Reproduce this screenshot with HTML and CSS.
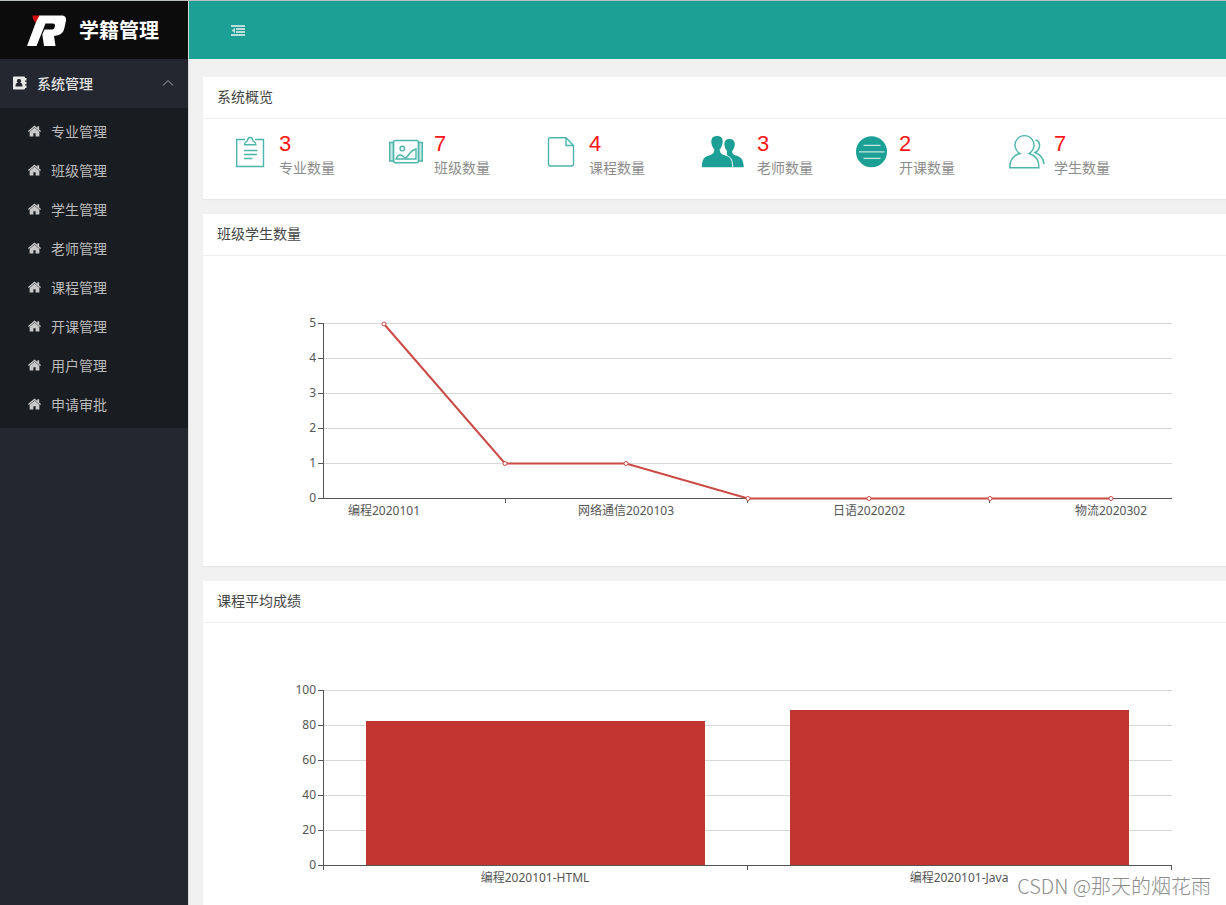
FILE: index.html
```html
<!DOCTYPE html>
<html lang="zh-CN">
<head>
<meta charset="utf-8">
<title>学籍管理</title>
<link rel="stylesheet" href="styles.css">
</head>
<body>
<svg class="defs" aria-hidden="true">
  <symbol id="home" viewBox="0 0 12 11"><path d="M6 .4 0 5.600l.7.9L6 2l5.300 4.500.7-.9-1.700-1.500V1H8.600v1.600zM6 2.500 1.500 6.300v4.200H5V7.500h2v3h3.500V6.300z"/></symbol>
</svg>
<div class="app">
  <aside class="sidebar">
    <div class="brand">
      <svg class="brand-logo" viewBox="0 0 40 32" aria-hidden="true">
        <path class="logo-red" d="M5.500.5h8L9 7.500C7 6.500 5.500 4 5.500.5z"/>
        <path class="logo-white" d="M12.500.5h21.500c4 0 5.700 2 4.900 5.500l-1.500 7c-.8 4-2.900 6.300-6.400 7.300l-4 .7 1.500 10H17L15.300 19.500l2.200-5h7c1.800 0 2.800-.6 3.200-2.300l.2-.9c.4-1.900-.3-2.700-2-2.700H18.500L9.500 31H0L8.800 7.500z"/>
      </svg>
      <h1 class="brand-name">学籍管理</h1>
    </div>
    <nav>
      <button class="group" type="button" aria-expanded="true">
        <svg class="group-icon" viewBox="0 0 14 14" aria-hidden="true"><path class="book" d="M1 .5H11q1 0 1 1v11Q12 13.500 11 13.500H1Q0 13.500 0 12.500v-11Q0 .5 1 .5zM12 2h1.500v2.500H12zM12 5.800h1.500v2.500H12zM12 9.500h1.500V12H12z"/><path class="person" d="M6 3a2 2 0 0 1 1.200 3.700c1.500.3 2.300 1.200 2.300 3.800h-7c0-2.600.8-3.500 2.300-3.800A2 2 0 0 1 6 3z"/></svg>
        <span>系统管理</span>
        <svg class="chevron" viewBox="0 0 12 8" aria-hidden="true"><path d="M1 6.500 6 1.500l5 5"/></svg>
      </button>
      <ul class="menu">
        <li><a href="#"><svg><use href="#home"/></svg>专业管理</a></li>
        <li><a href="#"><svg><use href="#home"/></svg>班级管理</a></li>
        <li><a href="#"><svg><use href="#home"/></svg>学生管理</a></li>
        <li><a href="#"><svg><use href="#home"/></svg>老师管理</a></li>
        <li><a href="#"><svg><use href="#home"/></svg>课程管理</a></li>
        <li><a href="#"><svg><use href="#home"/></svg>开课管理</a></li>
        <li><a href="#"><svg><use href="#home"/></svg>用户管理</a></li>
        <li><a href="#"><svg><use href="#home"/></svg>申请审批</a></li>
      </ul>
    </nav>
  </aside>
  <div class="page">
    <header class="topbar">
      <button class="toggle" type="button" aria-label="折叠菜单">
        <svg viewBox="0 0 14 11" aria-hidden="true"><path d="M0 0h14v2H0zM5 3h9v2H5zM5 6h9v2H5zM0 9h14v2H0zM4 2.800v5.400L.5 5.500z"/></svg>
      </button>
    </header>
    <main class="content">
      <section class="card">
        <h2 class="card-title">系统概览</h2>
        <div class="stats">
          <div class="stat">
            <svg class="stat-icon outline" viewBox="0 0 45 48" aria-hidden="true"><path d="M11 7.500H2.700V34.500H29.500V7.500H21M10.500 12.700c0-3 3-2.700 3.200-4.700.3-3.300 4.700-3.300 5 0 .2 2 3.200 1.700 3.200 4.700zM10 18.500h13.500M10 22.500h13M10 26.500h8.500"/></svg>
            <p class="figure"><strong>3</strong><span>专业数量</span></p>
          </div>
          <div class="stat">
            <svg class="stat-icon outline" viewBox="0 0 45 48" aria-hidden="true"><path class="tint" d="M4.500 10.500H.7v18.500h3.800zM29.500 10.500h3.800v18.500h-3.800z"/><rect x="4.500" y="8.500" width="25" height="22.300" rx="2"/><circle cx="13.300" cy="16.600" r="2.300"/><path d="M7 27c2-5 5-5 8-2 4 3 4-6 12-8v10z"/></svg>
            <p class="figure"><strong>7</strong><span>班级数量</span></p>
          </div>
          <div class="stat">
            <svg class="stat-icon outline" viewBox="0 0 45 48" aria-hidden="true"><path d="M6.500 5.700H22l7.500 7.800V32q0 2-2 2h-21q-2 0-2-2V7.700q0-2 2-2zM22 5.700v7.800h7.500"/></svg>
            <p class="figure"><strong>4</strong><span>课程数量</span></p>
          </div>
          <div class="stat">
            <svg class="stat-icon wide solid" viewBox="0 0 58 48" aria-hidden="true"><path d="M30.500 7c3.900 0 5.700 2.700 5.200 6.200-.3 2.300-1.200 4.300-2.500 5.800 0 3 1 3.500 4 4.500 4.500 1.500 7.500 4 7.500 11.800H28V19c-1.300-1.500-2.200-3.500-2.500-5.800C25 9.700 26.600 7 30.500 7z"/><path class="front" d="M18 3.500c4.600 0 6.700 3.200 6.100 7.500-.3 2.500-1.500 4.800-2.900 6.500 0 3.500 1.500 4.500 5 5.500 5 1.500 7.500 4 7.500 12.800H2.300C2.300 27 5 24.500 10 23c3.500-1 4.800-2 4.800-5.500-1.400-1.700-2.600-4-2.900-6.500-.6-4.300 1.500-7.500 6.100-7.500z"/></svg>
            <p class="figure"><strong>3</strong><span>老师数量</span></p>
          </div>
          <div class="stat">
            <svg class="stat-icon solid" viewBox="0 0 45 48" aria-hidden="true"><circle cx="17.500" cy="19.700" r="15.500"/><path class="lines" d="M9.500 13.300h17M5 19.800h25.500M9.500 26.300h17"/></svg>
            <p class="figure"><strong>2</strong><span>开课数量</span></p>
          </div>
          <div class="stat">
            <svg class="stat-icon outline" viewBox="0 0 45 48" aria-hidden="true"><path d="M11 21.500a9.500 9.500 0 1 1 9 0c6 1.500 10 6.500 10 14.200H.7C.7 28 5 23 11 21.500zM26.500 8c6 1.500 5 10-.5 12.500 5.500 2 8.500 6 9 11.500"/></svg>
            <p class="figure"><strong>7</strong><span>学生数量</span></p>
          </div>
        </div>
      </section>
      <section class="card">
        <h2 class="card-title">班级学生数量</h2>
        <svg class="chart" viewBox="0 0 1023 310" role="img" aria-label="班级学生数量">
          <path class="grid" d="M121 67.500H969M121 102.500H969M121 137.500H969M121 172.500H969M121 207.500H969"/>
          <path class="axis" d="M120.500 67V243M115 67.500h5M115 102.500h5M115 137.500h5M115 172.500h5M115 207.500h5M115 242.500H969M302.500 243v4M544.500 243v4M786.500 243v4"/>
          <g class="y-labels"><text x="113" y="71">5</text><text x="113" y="106">4</text><text x="113" y="141">3</text><text x="113" y="176">2</text><text x="113" y="211">1</text><text x="113" y="246">0</text></g>
          <g class="x-labels"><text x="181" y="259">编程2020101</text><text x="423" y="259">网络通信2020103</text><text x="666" y="259">日语2020202</text><text x="908" y="259">物流2020302</text></g>
          <path class="line" d="M181 68 302 207.500H423L545 242.500H908"/>
          <g class="points"><circle cx="181" cy="68" r="2"/><circle cx="302" cy="207.500" r="2"/><circle cx="423" cy="207.500" r="2"/><circle cx="545" cy="242.500" r="2"/><circle cx="666" cy="242.500" r="2"/><circle cx="787" cy="242.500" r="2"/><circle cx="908" cy="242.500" r="2"/></g>
        </svg>
      </section>
      <section class="card">
        <h2 class="card-title">课程平均成绩</h2>
        <svg class="chart" viewBox="0 0 1023 310" role="img" aria-label="课程平均成绩">
          <path class="grid" d="M121 67.500H969M121 102.500H969M121 137.500H969M121 172.500H969M121 207.500H969"/>
          <path class="bar" d="M163 98H502V242H163zM587 87H926V242H587z"/>
          <path class="axis" d="M120.500 67V247M115 67.500h5M115 102.500h5M115 137.500h5M115 172.500h5M115 207.500h5M115 242.500H969M544.500 243v4M968.500 243v4"/>
          <g class="y-labels"><text x="113" y="71">100</text><text x="113" y="106">80</text><text x="113" y="141">60</text><text x="113" y="176">40</text><text x="113" y="211">20</text><text x="113" y="246">0</text></g>
          <g class="x-labels"><text x="332" y="259">编程2020101-HTML</text><text x="756" y="259">编程2020101-Java</text></g>
        </svg>
      </section>
    </main>
  </div>
  <p class="watermark">CSDN @那天的烟花雨</p>
</div>
</body>
</html>
```

FILE: styles.css
```css
* { box-sizing: border-box; margin: 0; padding: 0; }
body { font-family: "Liberation Sans", "Noto Sans CJK SC", sans-serif; font-size: 14px; color: #444; background: #f1f1f1; }
.defs { position: absolute; width: 0; height: 0; }
.app { position: relative; display: flex; height: 100vh; overflow: hidden; border-top: 1px solid #b9bfc1; }
.sidebar { flex: 0 0 188px; background: #24272f; }
.brand { display: flex; align-items: center; gap: 12px; height: 58px; padding: 2px 0 0 27px; background: #0c0c0c; }
.brand-logo { width: 40px; height: 32px; }
.logo-red { fill: #d40f0f; }
.logo-white { fill: #fff; }
.brand-name { font-size: 20px; line-height: 28px; color: #fff; white-space: nowrap; }
.group { display: flex; align-items: center; width: 100%; height: 49px; padding: 0 14px 2px 13px; border: 0; background: transparent; color: #e0e0e0; font: inherit; font-weight: 500; }
.group-icon { width: 14px; height: 14px; margin-right: 10px; }
.book { fill: #e8e8e8; }
.person { fill: #24272f; }
.chevron { width: 12px; height: 8px; margin-left: auto; fill: none; stroke: #a9abae; }
.menu { list-style: none; padding: 3px 0 5px; background: #191c20; }
.menu a { display: flex; align-items: center; gap: 10px; height: 39px; padding-left: 28px; color: #bababb; text-decoration: none; }
.menu svg { width: 13px; height: 12px; fill: #c8c8c9; }
.page { flex: 1; min-width: 0; border-left: 1px solid #d8dadb; }
.topbar { height: 58px; display: flex; align-items: center; padding-left: 42px; background: #1c9f95; }
.toggle { border: 0; background: transparent; line-height: 0; }
.toggle svg { width: 14px; height: 11px; fill: #b9ded9; }
.content { display: flex; flex-direction: column; gap: 15px; padding: 18px 0 0 14px; }
.card { background: #fff; box-shadow: 0 1px 1px #e6e6e6; }
.card-title { height: 42px; padding-left: 14px; border-bottom: 1px solid #f0f0f0; font-size: 14px; font-weight: 400; line-height: 40px; }
.stats { display: grid; grid-template-columns: repeat(6, 1fr); padding: 13px 62px 19px 31px; }
.stat { display: flex; }
.stat-icon { flex: none; width: 45px; height: 48px; }
.wide { width: 58px; }
.outline { fill: none; stroke: #4cb5ac; stroke-width: 1.4; }
.tint { fill: #c5e7e4; }
.solid { fill: #1c9f95; }
.front { stroke: #fff; }
.lines { stroke: #c5e7e4; stroke-width: 1.3; }
.figure { display: flex; flex-direction: column; line-height: 24px; white-space: nowrap; color: #8c8c8c; }
.figure strong { font-size: 22px; font-weight: 400; color: #ff1515; }
.chart { display: block; width: 100%; height: auto; font-family: "Noto Sans", "Noto Sans CJK SC", sans-serif; font-size: 12px; fill: #555; }
.grid { fill: none; stroke: #d8d8d8; }
.axis { fill: none; stroke: #555; }
.y-labels { text-anchor: end; }
.x-labels { text-anchor: middle; }
.line { fill: none; stroke: #ca4a46; stroke-width: 2; }
.points { fill: #fff; stroke: #ca4a46; }
.bar { fill: #c23531; }
.watermark { position: absolute; right: 15px; bottom: 5px; font-family: "Noto Sans CJK SC", sans-serif; font-size: 20px; line-height: 28px; font-weight: 300; color: #8d8d8d; }
```
